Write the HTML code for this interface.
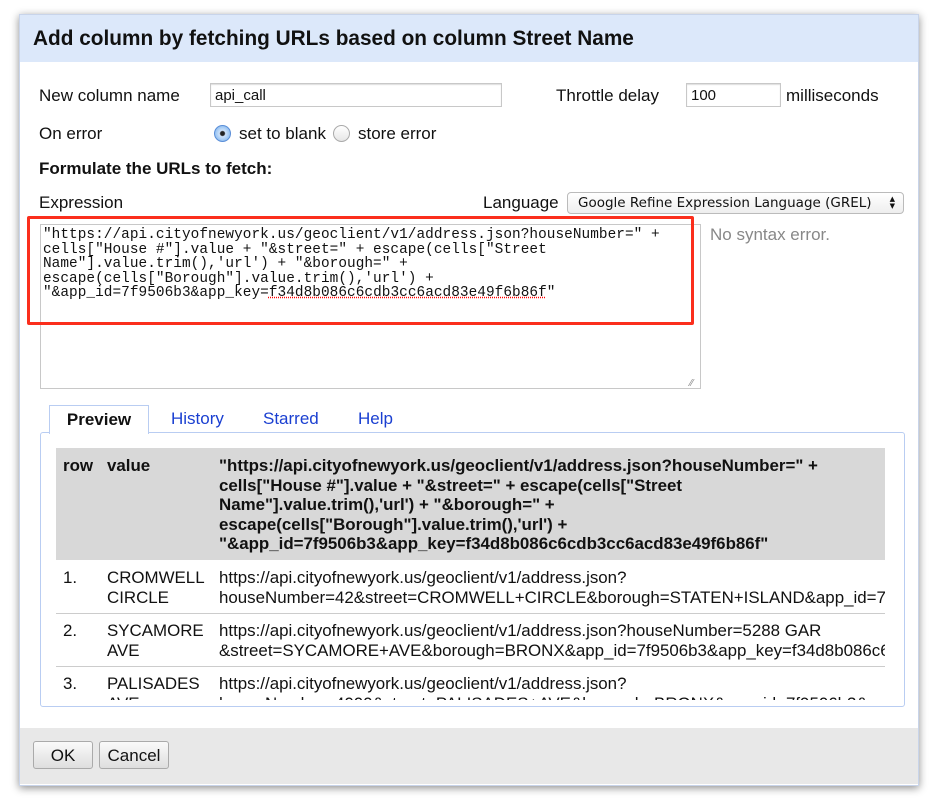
<!DOCTYPE html>
<html><head><style>
body{margin:0;width:936px;height:808px;background:#fff;font-family:"Liberation Sans",Arial,sans-serif;position:relative;overflow:hidden;color:#111}
.a{position:absolute}
.dlg{left:19px;top:14px;width:898px;height:770px;background:#fff;border:1px solid #c8d4ea;box-shadow:0 2px 8px rgba(0,0,0,.45)}
.hd{left:20px;top:15px;width:898px;height:47px;background:#dce8fa;font-weight:bold;font-size:20.8px;line-height:47px}
.t{font-size:17px}
.inp{border:1px solid #c8c8c8;box-shadow:inset 0 1px 1px #ddd;height:24px;font-size:15px;line-height:24px;padding-left:4px;box-sizing:border-box}
.mono{font-family:"Liberation Mono",monospace;font-size:14.4px;line-height:14.5px;white-space:pre;letter-spacing:0.05px}
.rad{width:17px;height:17px;border-radius:50%;border:1px solid #aaa;background:linear-gradient(#fff,#e6e6e6);box-sizing:border-box}
.tb{font-size:16.9px;line-height:19.5px}
.btn{border:1px solid #aaa;border-radius:3px;background:linear-gradient(#fafafa,#dedede);font-size:17px;text-align:center;line-height:27px;height:28px;box-sizing:border-box}
</style></head><body>
<div class="a dlg"></div>
<div class="a hd"><span style="padding-left:13px">Add column by fetching URLs based on column Street Name</span></div>

<div class="a t" style="left:39px;top:86px">New column name</div>
<div class="a inp" style="left:210px;top:83px;width:292px">api_call</div>
<div class="a t" style="left:556px;top:86px">Throttle delay</div>
<div class="a inp" style="left:686px;top:83px;width:95px">100</div>
<div class="a t" style="left:786px;top:86px">milliseconds</div>

<div class="a t" style="left:39px;top:124px">On error</div>
<div class="a rad" style="left:214px;top:125px;border-color:#5a8ed8;background:radial-gradient(circle,#222 0 2px,#cfe3fb 3px,#8fbef0 8px)"></div>
<div class="a t" style="left:239px;top:124px">set to blank</div>
<div class="a rad" style="left:333px;top:125px"></div>
<div class="a t" style="left:358px;top:124px">store error</div>

<div class="a t" style="left:39px;top:159px;font-weight:bold">Formulate the URLs to fetch:</div>
<div class="a t" style="left:39px;top:193px">Expression</div>
<div class="a t" style="left:483px;top:193px">Language</div>
<div class="a" style="left:567px;top:192px;width:337px;height:22px;border:1px solid #bbb;border-radius:4px;background:linear-gradient(#fff,#eee);box-sizing:border-box;font-family:'DejaVu Sans',sans-serif;font-size:13.5px;line-height:20px;padding-left:10px">Google Refine Expression Language (GREL)<span style="position:absolute;right:8px;top:3px;font-size:7px;line-height:7px">▲<br>▼</span></div>

<div class="a" style="left:40px;top:224px;width:661px;height:165px;border:1px solid #c8c8c8;box-sizing:border-box"></div>
<div class="a" style="left:690px;top:378px;font-size:10px;color:#888">⁄⁄</div>
<div class="a mono" style="left:43px;top:228px">"https://api.cityofnewyork.us/geoclient/v1/address.json?houseNumber=" +
cells["House #"].value + "&amp;street=" + escape(cells["Street
Name"].value.trim(),'url') + "&amp;borough=" +
escape(cells["Borough"].value.trim(),'url') +
"&amp;app_id=7f9506b3&amp;app_key=<span style="text-decoration:underline dotted red">f34d8b086c6cdb3cc6acd83e49f6b86f</span>"</div>
<div class="a" style="left:27px;top:216px;width:667px;height:109px;border:3px solid #fb2e1c;border-radius:2px;box-sizing:border-box"></div>
<div class="a t" style="left:710px;top:225px;color:#888">No syntax error.</div>

<div class="a" style="left:40px;top:432px;width:865px;height:275px;border:1px solid #b9cdf2;border-radius:3px;box-sizing:border-box"></div>
<div class="a" style="left:49px;top:405px;width:100px;height:29px;border:1px solid #b9cdf2;border-bottom:none;background:#fff;box-sizing:border-box;font-weight:bold;font-size:17px;text-align:center;line-height:27px">Preview</div>
<div class="a t" style="left:171px;top:409px;color:#1a3fd1">History</div>
<div class="a t" style="left:263px;top:409px;color:#1a3fd1">Starred</div>
<div class="a t" style="left:358px;top:409px;color:#1a3fd1">Help</div>

<div class="a" style="left:56px;top:448px;width:829px;height:112px;background:#d8d8d8"></div>
<div class="a tb" style="left:63px;top:456px;font-weight:bold">row</div>
<div class="a tb" style="left:107px;top:456px;font-weight:bold">value</div>
<div class="a tb" style="left:219px;top:456px;font-weight:bold;white-space:pre">"https://api.cityofnewyork.us/geoclient/v1/address.json?houseNumber=" +
cells["House #"].value + "&amp;street=" + escape(cells["Street
Name"].value.trim(),'url') + "&amp;borough=" +
escape(cells["Borough"].value.trim(),'url') +
"&amp;app_id=7f9506b3&amp;app_key=f34d8b086c6cdb3cc6acd83e49f6b86f"</div>

<div class="a" style="left:56px;top:560px;width:829px;height:140px;overflow:hidden">
<div class="a tb" style="left:7px;top:8px">1.</div>
<div class="a tb" style="left:51px;top:8px">CROMWELL<br>CIRCLE</div>
<div class="a tb" style="left:163px;top:8px;white-space:pre">https://api.cityofnewyork.us/geoclient/v1/address.json?
houseNumber=42&amp;street=CROMWELL+CIRCLE&amp;borough=STATEN+ISLAND&amp;app_id=7f</div>
<div class="a" style="left:0;top:53px;width:829px;height:1px;background:#ccc"></div>
<div class="a tb" style="left:7px;top:61px">2.</div>
<div class="a tb" style="left:51px;top:61px">SYCAMORE<br>AVE</div>
<div class="a tb" style="left:163px;top:61px;white-space:pre">https://api.cityofnewyork.us/geoclient/v1/address.json?houseNumber=5288 GAR
&amp;street=SYCAMORE+AVE&amp;borough=BRONX&amp;app_id=7f9506b3&amp;app_key=f34d8b086c6c</div>
<div class="a" style="left:0;top:106px;width:829px;height:1px;background:#ccc"></div>
<div class="a tb" style="left:7px;top:114px">3.</div>
<div class="a tb" style="left:51px;top:114px">PALISADES<br>AVE</div>
<div class="a tb" style="left:163px;top:114px;white-space:pre">https://api.cityofnewyork.us/geoclient/v1/address.json?
houseNumber=4000&amp;street=PALISADES+AVE&amp;borough=BRONX&amp;app_id=7f9506b3&amp;a</div>
</div>

<div class="a" style="left:20px;top:728px;width:898px;height:56px;background:#e8e8e8"></div>
<div class="a btn" style="left:33px;top:741px;width:60px">OK</div>
<div class="a btn" style="left:99px;top:741px;width:70px">Cancel</div>
</body></html>
